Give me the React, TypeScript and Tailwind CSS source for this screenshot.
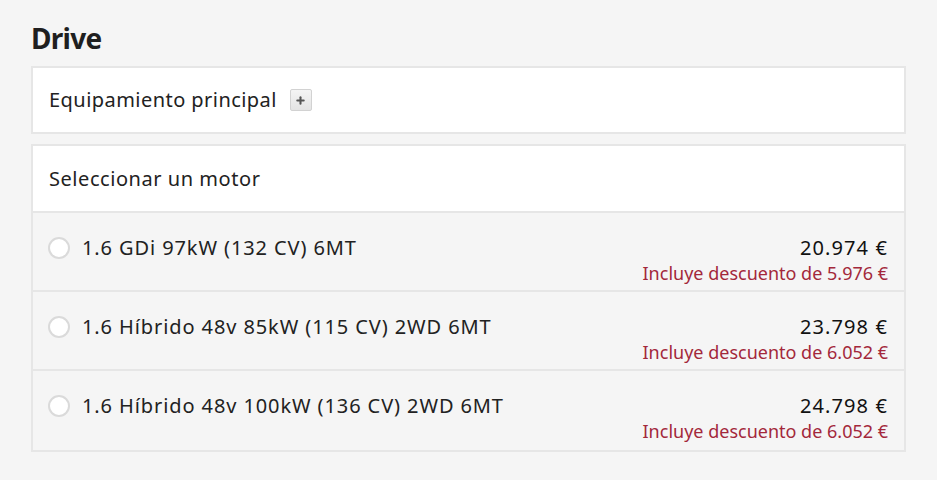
import { Plus } from 'lucide-react';

const engines = [
  { name: '1.6 GDi 97kW (132 CV) 6MT', price: '20.974 €', discount: '5.976 €' },
  { name: '1.6 Híbrido 48v 85kW (115 CV) 2WD 6MT', price: '23.798 €', discount: '6.052 €' },
  { name: '1.6 Híbrido 48v 100kW (136 CV) 2WD 6MT', price: '24.798 €', discount: '6.052 €' },
];

export default function App() {
  return (
    <div
      className="h-[480px] w-[937px] overflow-hidden bg-[#f5f5f5] px-[31px] pt-[21px] text-[#222]"
      style={{ fontFamily: '"Noto Sans", "Open Sans", sans-serif' }}
    >
      <h2 className="h-[45px] text-[28px] font-bold leading-[34px] tracking-[-0.7px] text-[#1f1f1f]">Drive</h2>

      {/* Equipment */}
      <div className="flex h-[68px] items-center gap-[13px] border-2 border-[#e6e6e6] bg-white pl-4">
        <span className="text-[20px] leading-6 tracking-[0.45px]">Equipamiento principal</span>
        <span className="flex h-[22px] w-[22px] items-center justify-center rounded-[2px] border border-[#d2d2d2] bg-gradient-to-b from-[#f4f4f4] to-[#e4e4e4] text-[#555]">
          <Plus className="h-[11px] w-[11px]" strokeWidth={4.5} />
        </span>
      </div>

      {/* Engine selector */}
      <div className="mt-[10px] border-2 border-[#e6e6e6]">
        <div className="flex h-[67px] items-center border-b-2 border-[#e6e6e6] bg-white pl-4 text-[20px] tracking-[0.55px]">
          Seleccionar un motor
        </div>
        {engines.map((e, i) => (
          <div
            key={e.name}
            className={`flex h-[79px] justify-between bg-[#f5f5f5] px-4 pt-[23px] ${i < engines.length - 1 ? 'border-b-2 border-[#e6e6e6]' : ''}`}
          >
            <label className="flex h-6 items-center gap-3 text-[20px] tracking-[0.9px]">
              <span className="-ml-px h-[22px] w-[22px] rounded-full border-2 border-[#dadada] bg-white" />
              {e.name}
            </label>
            <div className="text-right">
              <p className="text-[20px] leading-6 tracking-[1.1px] text-[#111]">{e.price}</p>
              <p className="text-[18px] leading-[26px] text-[#a3283b]">Incluye descuento de {e.discount}</p>
            </div>
          </div>
        ))}
      </div>
    </div>
  );
}
